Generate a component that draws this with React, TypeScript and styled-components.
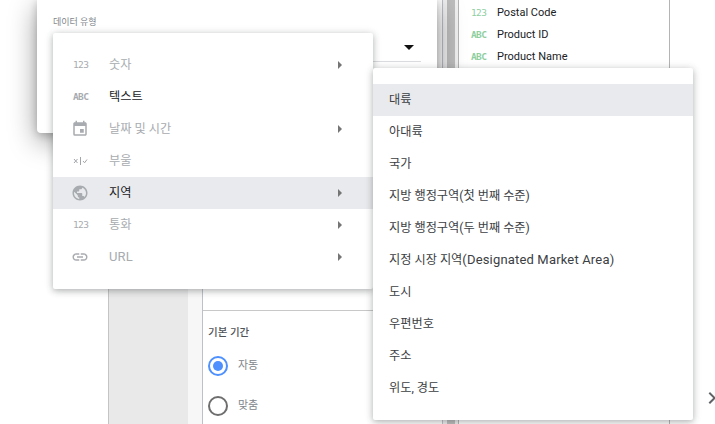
import { createGlobalStyle } from 'styled-components';
import styled from 'styled-components';
import { MdEvent, MdPublic, MdLink, MdChevronRight } from 'react-icons/md';
import type { ReactNode } from 'react';

const Global = createGlobalStyle`
  html, body { margin: 0; padding: 0; background: #fff; }
  body { font-family: Roboto, "Noto Sans CJK KR", sans-serif; overflow: hidden; }
`;

// --- page behind the dialog ---
const Page = styled.div`
  position: relative;
  display: flex;
  width: 715px;
  height: 424px;
  overflow: hidden;
  background: #fff;
`;
const LeftBlank = styled.div`
  width: 108px;
  flex: none;
`;
const Rail = styled.div`
  width: 80px;
  flex: none;
  background: #e9e9e9;
  border-left: 1px solid #c4c4c4;
  box-sizing: border-box;
`;
const RailEdge = styled.div`
  width: 14px;
  flex: none;
  background: #f7f7f7;
`;
const Properties = styled.div`
  width: 241px;
  flex: none;
  box-sizing: border-box;
  display: flex;
  flex-direction: column;
  border-left: 1px solid #bdc1c6;
  border-right: 1px solid #bdc1c6;
`;
const PropertiesTop = styled.div`
  height: 311px;
  flex: none;
  box-sizing: border-box;
  border-bottom: 1px solid #c8c8c8;
`;
const DateSection = styled.div`
  padding: 15px 5px 0;
`;
const SectionTitle = styled.div`
  font-size: 10.5px;
  line-height: 14px;
  font-weight: 500;
  color: #4f5357;
  margin-bottom: 16px;
`;
const RadioRow = styled.div`
  display: flex;
  align-items: center;
  gap: 10px;
  height: 20px;
  margin-bottom: 20px;
  font-size: 11px;
  line-height: 16px;
  color: #80868b;
`;
const Radio = styled.span<{ $on?: boolean }>`
  width: 20px;
  height: 20px;
  box-sizing: border-box;
  border-radius: 50%;
  border: 2px solid ${(p) => (p.$on ? '#4d90fe' : '#6e6e6e')};
  display: flex;
  align-items: center;
  justify-content: center;
  &::after {
    content: '';
    display: ${(p) => (p.$on ? 'block' : 'none')};
    width: 10px;
    height: 10px;
    border-radius: 50%;
    background: #4d90fe;
  }
`;
const Gutter = styled.div`
  width: 15px;
  flex: none;
  display: flex;
  justify-content: center;
  background: #f0f0f0;
`;
const Thumb = styled.div`
  width: 8px;
  margin-left: 1px;
  height: 100%;
  background: #bdbdbd;
`;
const DataPanel = styled.div`
  width: 212px;
  flex: none;
  box-sizing: border-box;
  padding-top: 2px;
  border-left: 1px solid #b4b4b4;
  border-right: 1px solid #b4b4b4;
`;
const FieldRow = styled.div`
  display: flex;
  align-items: center;
  height: 22px;
  padding-left: 12px;
  font-size: 11px;
  line-height: 16px;
  color: #202124;
`;
const FieldType = styled.span<{ $thin?: boolean }>`
  width: 26px;
  flex: none;
  font-family: "DejaVu Sans Mono", monospace;
  font-size: 9.5px;
  font-weight: ${(p) => (p.$thin ? 400 : 700)};
  letter-spacing: -0.6px;
  color: #8fcf9f;
`;
const RightEdge = styled.div`
  flex: 1;
  display: flex;
  align-items: flex-end;
  justify-content: flex-end;
  padding-bottom: 14px;
  color: #5f6368;
`;
const ClippedChevron = styled.span`
  display: flex;
  margin-right: -9px;
`;

// --- dialog and the two menus lie over the page ---
const Dialog = styled.div`
  position: absolute;
  left: 37px;
  top: 0;
  width: 400px;
  height: 133px;
  box-sizing: border-box;
  padding: 16px 16px 0;
  background: #fff;
  border-radius: 0 0 4px 4px;
  box-shadow: 0 8px 28px rgba(0, 0, 0, 0.4), 0 2px 8px rgba(0, 0, 0, 0.2);
`;
const DialogLabel = styled.div`
  font-size: 9px;
  line-height: 12px;
  color: #80868b;
`;
const SelectLine = styled.div`
  height: 34px;
  width: 368px;
  display: flex;
  align-items: center;
  justify-content: flex-end;
  padding-right: 7px;
  box-sizing: border-box;
  border-bottom: 1px solid #dadce0;
`;
const DropArrow = styled.span`
  width: 0;
  height: 0;
  border-left: 5px solid transparent;
  border-right: 5px solid transparent;
  border-top: 5px solid #111;
  margin-top: 6px;
`;
const Menu = styled.div<{ $x: number; $y: number }>`
  position: absolute;
  left: ${(p) => p.$x}px;
  top: ${(p) => p.$y}px;
  width: 320px;
  padding: 16px 0;
  background: #fff;
  border-radius: 2px;
  box-shadow: 0 2px 6px rgba(60, 64, 67, 0.3), 0 1px 10px rgba(60, 64, 67, 0.15);
`;
const MenuRow = styled.div<{ $active?: boolean; $dim?: boolean }>`
  display: flex;
  align-items: center;
  height: 32px;
  font-size: 12.2px;
  line-height: 16px;
  color: ${(p) => (p.$dim ? '#a8abaf' : '#202124')};
  background: ${(p) => (p.$active ? '#e8eaed' : 'transparent')};
`;
const IconCell = styled.span`
  width: 56px;
  flex: none;
  padding-left: 20px;
  box-sizing: border-box;
  display: flex;
  align-items: center;
  color: #a8abaf;
`;
const TypeMark = styled.span<{ $thin?: boolean }>`
  font-family: "DejaVu Sans Mono", monospace;
  font-size: 9.5px;
  font-weight: ${(p) => (p.$thin ? 400 : 700)};
  letter-spacing: -0.6px;
  color: #a8abaf;
`;
const RowLabel = styled.span`
  flex: 1;
`;
const Latin = styled.span`
  font-size: 13px;
  letter-spacing: 0.17px;
`;
const SubArrow = styled.span`
  width: 0;
  height: 0;
  margin-right: 31px;
  border-top: 4px solid transparent;
  border-bottom: 4px solid transparent;
  border-left: 4px solid #757575;
`;
const RegionRow = styled.div<{ $active?: boolean }>`
  display: flex;
  align-items: center;
  height: 32px;
  padding-left: 16px;
  font-size: 12.2px;
  line-height: 16px;
  color: #3c4043;
  background: ${(p) => (p.$active ? '#e8eaed' : 'transparent')};
`;

function BooleanMark() {
  return (
    <svg width="15" height="10" viewBox="0 0 15 10" fill="none" stroke="#a2a5a9" strokeWidth="1">
      <path d="M1 3l3.5 4M4.5 3L1 7" />
      <path d="M7.5 1v8" />
      <path d="M10 5l1.6 1.8L14 3.5" />
    </svg>
  );
}

const typeItems: { icon: ReactNode; label: ReactNode; dim: boolean; sub: boolean; active?: boolean }[] = [
  { icon: <TypeMark $thin>123</TypeMark>, label: '숫자', dim: true, sub: true },
  { icon: <TypeMark>ABC</TypeMark>, label: '텍스트', dim: false, sub: false },
  { icon: <MdEvent size={18} style={{ marginLeft: -2 }} />, label: '날짜 및 시간', dim: true, sub: true },
  { icon: <BooleanMark />, label: '부울', dim: true, sub: false },
  { icon: <MdPublic size={18} style={{ marginLeft: -2 }} />, label: '지역', dim: false, sub: true, active: true },
  { icon: <TypeMark $thin>123</TypeMark>, label: '통화', dim: true, sub: true },
  { icon: <MdLink size={18} style={{ marginLeft: -2 }} />, label: <Latin>URL</Latin>, dim: true, sub: true },
];

const regions: ReactNode[] = [
  '대륙',
  '아대륙',
  '국가',
  '지방 행정구역(첫 번째 수준)',
  '지방 행정구역(두 번째 수준)',
  <>
    지정 시장 지역<Latin>(Designated Market Area)</Latin>
  </>,
  '도시',
  '우편번호',
  '주소',
  '위도, 경도',
];

const fields = [
  { type: '123', name: 'Postal Code' },
  { type: 'ABC', name: 'Product ID' },
  { type: 'ABC', name: 'Product Name' },
];

export default function App() {
  return (
    <Page>
      <Global />
      <LeftBlank />
      <Rail />
      <RailEdge />
      <Properties>
        <PropertiesTop />
        <DateSection>
          <SectionTitle>기본 기간</SectionTitle>
          <RadioRow>
            <Radio $on />
            자동
          </RadioRow>
          <RadioRow>
            <Radio />
            맞춤
          </RadioRow>
        </DateSection>
      </Properties>
      <Gutter>
        <Thumb />
      </Gutter>
      <DataPanel>
        {fields.map((f) => (
          <FieldRow key={f.name}>
            <FieldType $thin={f.type === '123'}>{f.type}</FieldType>
            {f.name}
          </FieldRow>
        ))}
      </DataPanel>
      <RightEdge>
        <ClippedChevron>
          <MdChevronRight size={24} />
        </ClippedChevron>
      </RightEdge>

      <Dialog>
        <DialogLabel>데이터 유형</DialogLabel>
        <SelectLine>
          <DropArrow />
        </SelectLine>
      </Dialog>

      <Menu $x={53} $y={33}>
        {typeItems.map((item, i) => (
          <MenuRow key={i} $dim={item.dim} $active={item.active}>
            <IconCell>{item.icon}</IconCell>
            <RowLabel>{item.label}</RowLabel>
            {item.sub && <SubArrow />}
          </MenuRow>
        ))}
      </Menu>

      <Menu $x={373} $y={68}>
        {regions.map((r, i) => (
          <RegionRow key={i} $active={i === 0}>
            {r}
          </RegionRow>
        ))}
      </Menu>
    </Page>
  );
}
